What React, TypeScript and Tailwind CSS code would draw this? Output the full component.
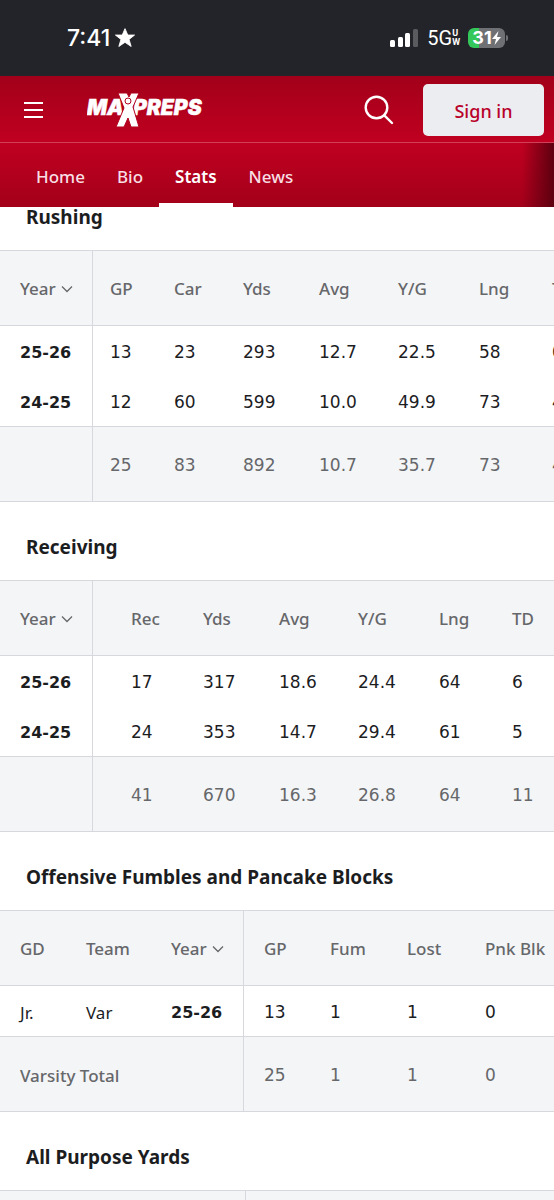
import React from 'react';
import clsx from 'clsx';

interface Column {
  label: string;
  className: string;
  frozen?: boolean;
  sorted?: boolean;
}

interface StatTableProps {
  title: string;
  columns: Column[];
  rows?: string[][];
  totalLabel?: string;
  totals?: string[];
}

const NAV_ITEMS = ['Home', 'Bio', 'Stats', 'News'];

const YEAR_COLUMN: Column = { label: 'Year', className: 'w-[93px] pl-5', frozen: true, sorted: true };

const SECTIONS: StatTableProps[] = [
  {
    title: 'Rushing',
    columns: [
      YEAR_COLUMN,
      { label: 'GP', className: 'w-16 pl-[17px]' },
      { label: 'Car', className: 'w-[69px] pl-[17px]' },
      { label: 'Yds', className: 'w-[76px] pl-[17px]' },
      { label: 'Avg', className: 'w-[79px] pl-[17px]' },
      { label: 'Y/G', className: 'w-[81px] pl-[17px]' },
      { label: 'Lng', className: 'w-[73px] pl-[17px]' },
      { label: 'TD', className: 'w-16 pl-[17px]' },
    ],
    rows: [
      ['25-26', '13', '23', '293', '12.7', '22.5', '58', '0'],
      ['24-25', '12', '60', '599', '10.0', '49.9', '73', '4'],
    ],
    totals: ['25', '83', '892', '10.7', '35.7', '73', '4'],
  },
  {
    title: 'Receiving',
    columns: [
      YEAR_COLUMN,
      { label: 'Rec', className: 'w-[93px] pl-[38px]' },
      { label: 'Yds', className: 'w-[76px] pl-[17px]' },
      { label: 'Avg', className: 'w-[79px] pl-[17px]' },
      { label: 'Y/G', className: 'w-[81px] pl-[17px]' },
      { label: 'Lng', className: 'w-[73px] pl-[17px]' },
      { label: 'TD', className: 'w-16 pl-[17px]' },
    ],
    rows: [
      ['25-26', '17', '317', '18.6', '24.4', '64', '6'],
      ['24-25', '24', '353', '14.7', '29.4', '61', '5'],
    ],
    totals: ['41', '670', '16.3', '26.8', '64', '11'],
  },
  {
    title: 'Offensive Fumbles and Pancake Blocks',
    columns: [
      { label: 'GD', className: 'w-[66px] pl-5' },
      { label: 'Team', className: 'w-[88px] pl-5' },
      { label: 'Year', className: 'w-[90px] pl-[17px]', frozen: true, sorted: true },
      { label: 'GP', className: 'w-[69px] pl-5' },
      { label: 'Fum', className: 'w-[77px] pl-[17px]' },
      { label: 'Lost', className: 'w-[78px] pl-[17px]' },
      { label: 'Pnk Blk', className: 'w-24 pl-[17px]' },
    ],
    rows: [['Jr.', 'Var', '25-26', '13', '1', '1', '0']],
    totalLabel: 'Varsity Total',
    totals: ['25', '1', '1', '0'],
  },
  {
    title: 'All Purpose Yards',
    columns: [
      { label: 'GD', className: 'w-[66px] pl-5' },
      { label: 'Team', className: 'w-[88px] pl-5' },
      { label: 'Year', className: 'w-[92px] pl-[17px]', frozen: true, sorted: true },
      { label: 'GP', className: 'w-80 pl-5' },
    ],
  },
];

const isNumeric = (value: string) => /^[\d.]+$/.test(value);

const StatusBar: React.FC = () => (
  <div className="flex h-[76px] shrink-0 items-center justify-between bg-[#232429] pr-[46px] pl-[67px] text-white">
    <div className="flex items-center gap-1 font-['Inter',sans-serif] text-[23px] font-medium">
      <span>7:41</span>
      <svg width="22" height="22" viewBox="0 0 24 24" fill="currentColor" stroke="currentColor" strokeWidth="1" strokeLinejoin="round">
        <path d="M12 1.8l3 7h7.4l-6 4.7 2.3 7.7L12 16.700l-6.700 4.500 2.300-7.700-6-4.700H9z" />
      </svg>
    </div>
    <div className="flex items-center gap-2">
      <svg width="29" height="18" viewBox="0 0 29 18" fill="white">
        <rect x="0" y="11" width="5" height="7" rx="1.500" />
        <rect x="8" y="8" width="5" height="10" rx="1.500" />
        <rect x="15" y="4" width="5" height="14" rx="1.500" />
        <rect x="23" y="0" width="5" height="18" rx="1.500" fillOpacity="0.250" />
      </svg>
      <div className="flex items-center font-['Roboto',sans-serif] text-xl">
        <span>5G</span>
        <span className="flex flex-col text-[9px] leading-[9px] font-bold">
          <span>U</span>
          <span>W</span>
        </span>
      </div>
      <div className="flex items-center gap-px">
        <div className="flex h-5 w-[37px] items-center justify-center rounded-md bg-linear-to-r from-[#34c759] from-30% to-[#6f7074] to-30% font-['Inter',sans-serif] text-lg font-bold">
          <span>31</span>
          <svg width="9" height="14" viewBox="0 0 9 14" fill="white">
            <path d="M6.500 0L0 8h4L2.500 14 9 6H5z" />
          </svg>
        </div>
        <span className="h-[6px] w-[2px] rounded-r bg-[#6f7074]" />
      </div>
    </div>
  </div>
);

const Logo: React.FC = () => (
  <svg width="122" height="34" viewBox="0 0 122 34" role="img" aria-label="MaxPreps">
    <g fill="white" stroke="white" strokeWidth="0.500" fontFamily="Inter, sans-serif" fontSize="21" fontWeight="900" fontStyle="italic">
      <text x="0" y="22">MA</text>
      <text x="46" y="22">PREPS</text>
    </g>
    <path d="M31 0h9l2 4 2-4h8l-6 14 6 20h-8l-3-9-4 9h-8l8-19z" fill="white" stroke="#b2001d" strokeWidth="1" />
    <circle cx="41" cy="8" r="3" fill="white" stroke="#b2001d" strokeWidth="1" />
  </svg>
);

const SiteHeader: React.FC = () => (
  <header className="relative z-10 shrink-0 font-['Noto_Sans',sans-serif]">
    <div className="flex h-[67px] items-center border-b border-[#d04058] bg-linear-to-b from-[#a2001a] to-[#c00020] pt-px pr-[10px] pl-6">
      <button aria-label="Menu" className="flex w-[19px] flex-col gap-[5px]">
        <span className="h-[2px] bg-white" />
        <span className="h-[2px] bg-white" />
        <span className="h-[2px] bg-white" />
      </button>
      <a href="#" className="ml-11">
        <Logo />
      </a>
      <button aria-label="Search" className="mr-[29px] ml-auto">
        <svg width="30" height="30" viewBox="0 0 30 30" fill="none" stroke="white" strokeWidth="2.400" strokeLinecap="round">
          <circle cx="12.500" cy="12.500" r="10.800" />
          <path d="M20.300 20.300L28 28" />
        </svg>
      </button>
      <button className="h-[52px] w-[121px] rounded-[5px] bg-[#ecedf1] pt-[2px] text-lg font-medium text-[#b8002a]">Sign in</button>
    </div>
    <nav className="relative flex h-16 bg-linear-to-b from-[#c00020] to-[#a3001a] pl-5 text-[17px] font-medium text-[#f8dfe3]">
      {NAV_ITEMS.map(item => (
        <a
          key={item}
          href="#"
          className={clsx('flex items-center border-b-4 px-4 pt-2', item === 'Stats' ? 'border-white font-semibold text-white' : 'border-transparent')}
        >
          {item}
        </a>
      ))}
      <span className="absolute inset-y-0 right-0 w-8 bg-linear-to-r from-transparent to-[#5c000f]" />
    </nav>
  </header>
);

const StatTable: React.FC<StatTableProps> = ({ title, columns, rows = [], totalLabel, totals }) => {
  const frozenCount = columns.findIndex(c => c.frozen) + 1;

  return (
    <section>
      <h2 className="h-[78px] pt-[31px] pl-[26px] text-[19px] leading-7 font-bold text-[#1c1d1f]">{title}</h2>
      <div className="overflow-hidden">
        <table className="w-max table-fixed border-separate border-spacing-0 text-left whitespace-nowrap">
          <thead>
            <tr className="h-[76px] bg-[#f4f5f7]">
              {columns.map(col => (
                <th
                  key={col.label}
                  className={clsx('border-y border-[#d6d8de] pt-[2px] text-[17px] font-medium text-[#66676a]', col.className, col.frozen && 'border-r')}
                >
                  {col.sorted ? (
                    <button className="flex items-center gap-[5px]">
                      {col.label}
                      <svg width="12" height="8" viewBox="0 0 12 8" fill="none" stroke="currentColor" strokeWidth="1.300">
                        <path d="M1 1.500l5 5 5-5" />
                      </svg>
                    </button>
                  ) : (
                    col.label
                  )}
                </th>
              ))}
            </tr>
          </thead>
          <tbody>
            {rows.map((row, i) => (
              <tr key={i} className="h-[50px] text-[#1c1d1f]">
                {row.map((value, c) => (
                  <td
                    key={c}
                    className={clsx(
                      'pt-[3px]',
                      columns[c].className,
                      columns[c].frozen && "border-r border-[#d6d8de] font-['DejaVu_Sans',sans-serif] text-base font-bold",
                      !columns[c].frozen && (isNumeric(value) ? "font-['DejaVu_Sans',sans-serif] text-[17px]" : 'text-[17px]')
                    )}
                  >
                    {value}
                  </td>
                ))}
              </tr>
            ))}
          </tbody>
          {totals && (
            <tfoot>
              <tr className="h-[76px] bg-[#f4f5f7] text-[17px] text-[#66676a]">
                <td colSpan={frozenCount} className="border-y border-r border-[#d6d8de] pt-1 pl-5 font-medium">
                  {totalLabel}
                </td>
                {totals.map((value, c) => (
                  <td
                    key={c}
                    className={clsx("border-y border-[#d6d8de] pt-1 font-['DejaVu_Sans',sans-serif]", columns[c + frozenCount].className)}
                  >
                    {value}
                  </td>
                ))}
              </tr>
            </tfoot>
          )}
        </table>
      </div>
    </section>
  );
};

const App: React.FC = () => (
  <div className="flex h-screen flex-col overflow-hidden bg-white">
    <StatusBar />
    <SiteHeader />
    {/* list is scrolled a little way under the header */}
    <main className="-mt-[35px] min-h-0 flex-1 overflow-hidden font-['Noto_Sans',sans-serif]">
      {SECTIONS.map(section => (
        <StatTable key={section.title} {...section} />
      ))}
    </main>
  </div>
);

export default App;
